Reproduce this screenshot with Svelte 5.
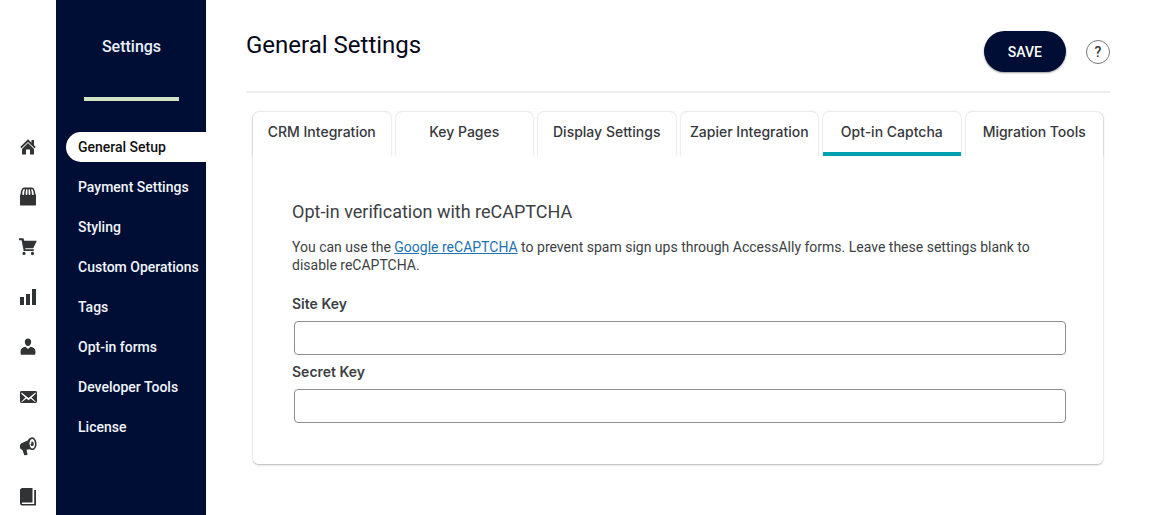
<script>
	const menu = [
		'General Setup',
		'Payment Settings',
		'Styling',
		'Custom Operations',
		'Tags',
		'Opt-in forms',
		'Developer Tools',
		'License'
	];
	const tabs = [
		'CRM Integration',
		'Key Pages',
		'Display Settings',
		'Zapier Integration',
		'Opt-in Captcha',
		'Migration Tools'
	];

	// Rail icons, drawn on a 20x20 grid
	const rail = [
		{
			name: 'Dashboard',
			path: 'M16 8.2l1.800 1.800-1.300 1.300L10 4.900l-6.500 6.400L2.200 10 10 2.200l3.500 3.500V3H16zM10 6.040l6 5.990V17.500h-4v-5H8v5H4v-5.470z'
		},
		{
			name: 'Store',
			path: 'M2 7.500h16V18c0 .3-.2.5-.5.5h-15c-.3 0-.5-.2-.5-.5zM6 .5h8c2 0 3.100 3 3.400 7H2.600C2.900 3.500 4 .5 6 .5zM5.600 2.200C4.700 3.400 4.300 5 4.200 7.200c0 .9 1.900.9 1.900 0 0-2 .3-3.600.9-5zM8.300 2.200C7.800 3.600 7.600 5.200 7.600 7.200c0 .9 1.800.9 1.800 0v-5zM10.600 2.200v5c0 .9 1.800.9 1.800 0 0-2-.2-3.600-.7-5zM13 2.200c.6 1.400.9 3 .9 5 0 .9 1.900.9 1.900 0-.1-2.200-.5-3.800-1.400-5z'
		},
		{
			name: 'Orders',
			path: 'M1 1.300h4.500l.7 2.500h12.600l-3.500 7.400H7.200l.3 1h8.300v1.900H5.700L3.600 3.300H1zM6 14.800a1.600 1.600 0 1 1 0 3.200 1.600 1.600 0 0 1 0-3.200zM14.500 14.800a1.600 1.600 0 1 1 0 3.200 1.600 1.600 0 0 1 0-3.200z'
		},
		{ name: 'Reports', path: 'M18 18V2h-4v16zM12 18V7H8v11zM6 18v-8H2v8z' },
		{
			name: 'Members',
			path: 'M10 1.500c2 0 3.200 1.500 3.200 3.500S11.700 9 10 9 6.800 7 6.800 5 8 1.500 10 1.500zM7.500 9.700l2.500 2.400 2.500-2.400c3 .4 4.900 1.800 4.900 4.500v2.200c0 .8-.5 1.300-1.300 1.300H3.900c-.8 0-1.300-.5-1.300-1.300v-2.200c0-2.700 1.900-4.100 4.900-4.500z'
		},
		{
			name: 'Email',
			path: 'M19 14.500v-9c0-.83-.67-1.500-1.500-1.500H3.490c-.83 0-1.500.67-1.500 1.500v9c0 .83.67 1.500 1.500 1.500H17.500c.83 0 1.500-.67 1.500-1.500zM17.690 5.890c.33.33.15.67-.03.84l-4.050 3.770 3.900 4.060c.12.14.2.36.06.51-.13.16-.43.15-.56.05l-4.370-3.730-2.140 1.950-2.130-1.950-4.370 3.730c-.13.1-.43.11-.56-.05-.14-.15-.06-.37.06-.51l3.900-4.060-4.060-3.770c-.18-.17-.36-.51-.03-.84s.67-.17.95.07l6.240 5.040 6.250-5.040c.28-.24.62-.4.95-.07z'
		},
		{
			name: 'Marketing',
			path: 'M13.300.4c2.700-.5 4.900 2.200 5.200 5.800.3 3.600-1.300 6.600-3.700 6.900-1.100.1-2-.2-2.800-.9l-3.500.6 1 4.300c.1.500-.1.800-.5.900l-1.900.3c-.5.100-.8-.1-1-.6L4.500 12.900c-1.700 0-2.500-1.300-2.600-3.100C1.800 8 2.500 6.500 4 5.900l5.700-2.300C10.400 1.900 11.700.7 13.300.4zM14 1.900c-1.700.3-2.700 2.500-2.500 5 .3 2.700 1.600 4.800 3.200 4.600 1.600-.2 2.500-2.600 2.200-5.200C16.700 3.700 15.600 1.700 14 1.900zM13.600 4.500c1.200-.2 2 .8 2.100 2.100.1 1.300-.4 2.400-1.400 2.500-1 .1-1.700-.8-1.800-2.200.6.1.900-.2.900-.8s-.1-1.100.2-1.600z'
		},
		{
			name: 'Courses',
			path: 'M4.500 1H14.500V15.500H4.500C3.500 15.500 3.500 17 4.500 17H16.200V3H18V18.600H4.500C3 18.600 2 17.600 2 16V3.500C2 2 3 1 4.500 1z'
		}
	];

	let current = $state('General Setup');
	let activeTab = $state('Opt-in Captcha');
	let siteKey = $state('');
	let secretKey = $state('');
</script>

<div class="layout">
	<nav class="rail" aria-label="Main">
		{#each rail as item}
			<a href="#{item.name.toLowerCase()}" aria-label={item.name}>
				<svg viewBox="0 0 20 20" width="20" height="20" fill-rule="evenodd"><path d={item.path} /></svg>
			</a>
		{/each}
	</nav>

	<aside class="sidebar">
		<h2>Settings</h2>
		<nav class="menu" aria-label="Settings">
			{#each menu as item}
				<a href="#settings" class:current={item === current} onclick={() => (current = item)}>{item}</a>
			{/each}
		</nav>
	</aside>

	<main>
		<header>
			<h1>General Settings</h1>
			<div class="actions">
				<button class="save" type="button">SAVE</button>
				<button class="help" type="button" aria-label="Help">?</button>
			</div>
		</header>

		<section class="card">
			<div class="tabs" role="tablist">
				{#each tabs as tab}
					<button
						type="button"
						role="tab"
						aria-selected={tab === activeTab}
						class:active={tab === activeTab}
						onclick={() => (activeTab = tab)}>{tab}</button
					>
				{/each}
			</div>

			<form class="panel">
				<h3>Opt-in verification with reCAPTCHA</h3>
				<p>
					You can use the <a href="#recaptcha">Google reCAPTCHA</a> to prevent spam sign ups through AccessAlly
					forms. Leave these settings blank to disable reCAPTCHA.
				</p>
				<label for="site-key">Site Key</label>
				<input id="site-key" type="text" bind:value={siteKey} />
				<label for="secret-key">Secret Key</label>
				<input id="secret-key" type="text" bind:value={secretKey} />
			</form>
		</section>
	</main>
</div>

<style>
	:global(body) {
		background: #fff;
	}

	.layout {
		display: flex;
		min-height: 100vh;
		color: #3c3f44;
		font-family: Roboto, 'Liberation Sans', sans-serif;
		font-size: 14px;
	}

	button,
	input {
		font-family: inherit;
		box-sizing: border-box;
	}

	h1,
	h2,
	h3,
	p {
		margin: 0;
	}

	/* Icon rail */
	.rail {
		display: flex;
		flex-direction: column;
		align-items: center;
		gap: 30px;
		flex: 0 0 56px;
		padding-top: 137px;
	}

	.rail a,
	.rail svg {
		display: block;
	}

	.rail svg {
		fill: #323335;
	}

	/* Sidebar */
	.sidebar {
		flex: 0 0 150px;
		background: #000e35;
	}

	.sidebar h2 {
		margin: 0 27px 31px 28px;
		padding: 37px 0 40px;
		border-bottom: 4px solid #d0e3c4;
		color: #e9f1fb;
		font-size: 16px;
		font-weight: 500;
		line-height: 20px;
		text-align: center;
	}

	.menu {
		display: flex;
		flex-direction: column;
		gap: 10px;
		padding-left: 10px;
	}

	.menu a {
		padding-left: 12px;
		border-radius: 15px 0 0 15px;
		color: #f1f5fc;
		font-weight: 500;
		line-height: 30px;
		text-decoration: none;
		white-space: nowrap;
	}

	.menu .current {
		background: #fff;
		color: #111;
	}

	/* Page header */
	main {
		flex: 1;
		min-width: 0;
		padding: 0 40px;
	}

	header {
		display: flex;
		justify-content: space-between;
		align-items: flex-start;
		padding: 31px 0 19px;
		border-bottom: 2px solid #eee;
	}

	h1 {
		color: #060818;
		font-size: 24px;
		font-weight: 400;
		line-height: 28px;
	}

	.actions {
		display: flex;
		align-items: center;
		gap: 20px;
	}

	.save {
		height: 41px;
		padding: 0 24px;
		border: 0;
		border-radius: 21px;
		background: #000e35;
		box-shadow: 0 1px 2px rgba(0, 0, 0, 0.4);
		color: #fff;
		font-size: 14px;
		font-weight: 500;
	}

	.help {
		width: 24px;
		height: 24px;
		padding: 0;
		border: 1px solid #777;
		border-radius: 50%;
		background: #fff;
		color: #333;
		font-size: 14px;
		font-weight: 500;
	}

	/* Card */
	.card {
		margin: 19px 7px 0;
		border-radius: 6px;
		box-shadow: 0 1px 2px rgba(0, 0, 0, 0.3);
	}

	.tabs {
		display: grid;
		grid-template-columns: repeat(6, 1fr);
		gap: 5px;
	}

	.tabs button {
		height: 44px;
		padding: 0;
		border: 0;
		border-bottom: 4px solid transparent;
		border-radius: 6px 6px 0 0;
		background: #fff;
		box-shadow: 0 0 2px rgba(0, 0, 0, 0.25);
		color: #36383c;
		font-family: Inter, Roboto, sans-serif;
		font-size: 14px;
		font-weight: 500;
		line-height: 20px;
		white-space: nowrap;
	}

	.tabs .active {
		border-bottom-color: #00a0af;
		border-radius: 6px 6px 0 0;
	}

	.panel {
		display: flex;
		flex-direction: column;
		padding: 44px 35px 34px 39px;
		border-radius: 0 0 6px 6px;
		background: #fff;
		/* sits over the lower edge of the tab shadows */
		position: relative;
	}

	h3 {
		margin-bottom: 14px;
		font-size: 18px;
		font-weight: 400;
		line-height: 24px;
	}

	p {
		margin-bottom: 20px;
		line-height: 18px;
	}

	p a {
		color: #2271b1;
	}

	label {
		margin-bottom: 7px;
		font-family: Inter, Roboto, sans-serif;
		font-weight: 600;
		line-height: 20px;
	}

	.panel input {
		height: 34px;
		margin: 0 2px 7px;
		padding: 0 8px;
		border: 1px solid #8c8f94;
		border-radius: 4px;
		background: #fff;
		font-size: 14px;
	}
</style>
